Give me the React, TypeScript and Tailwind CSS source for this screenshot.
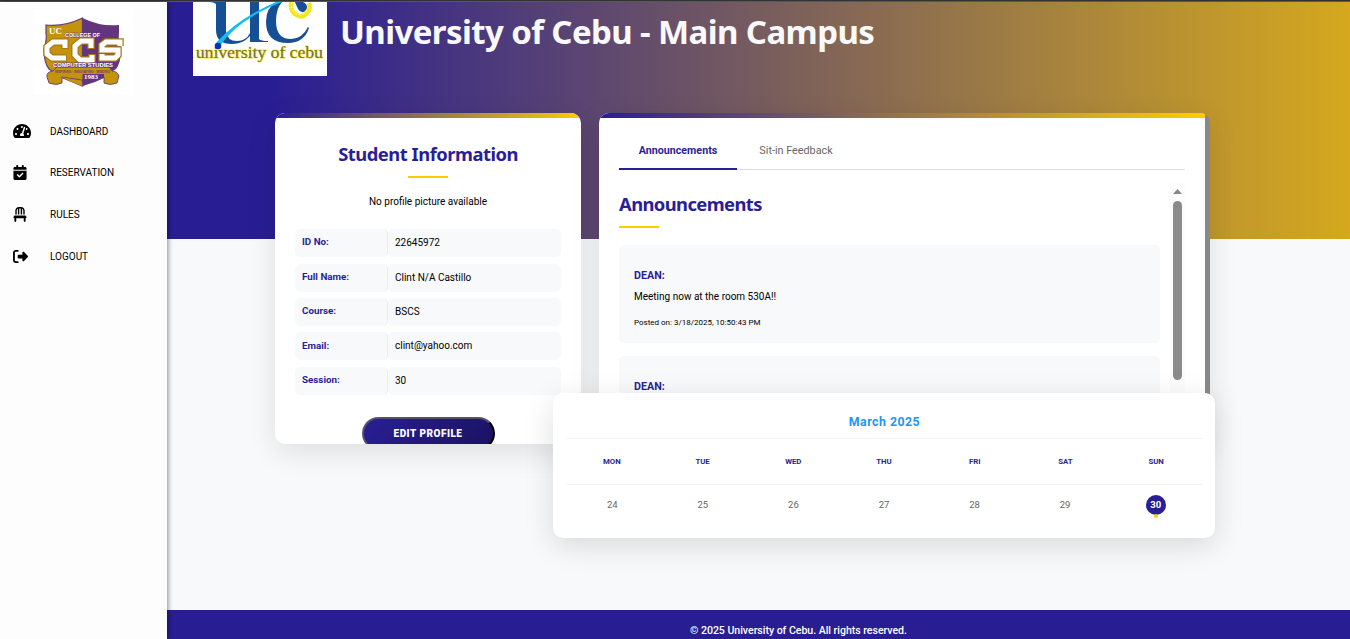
import React from "react";
import { FaCalendarCheck, FaChair, FaRightFromBracket } from "react-icons/fa6";
import { FaTachometerAlt } from "react-icons/fa";

const nav = [
  { label: "DASHBOARD", Icon: FaTachometerAlt, size: "h-4 w-[18px]" },
  { label: "RESERVATION", Icon: FaCalendarCheck, size: "h-[15px] w-[14px]" },
  { label: "RULES", Icon: FaChair, size: "h-[15px] w-[14px]" },
  { label: "LOGOUT", Icon: FaRightFromBracket, size: "h-[15px] w-[15px]" },
];

const info = [
  ["ID No:", "22645972"],
  ["Full Name:", "Clint N/A Castillo"],
  ["Course:", "BSCS"],
  ["Email:", "clint@yahoo.com"],
  ["Session:", "30"],
];

const weekdays = ["MON", "TUE", "WED", "THU", "FRI", "SAT", "SUN"];
const days = [24, 25, 26, 27, 28, 29, 30];

function CcsLogo() {
  return (
    <svg width="100" height="86" viewBox="0 0 100 86" className="block bg-white" fontFamily="Liberation Sans, sans-serif" fontWeight="bold">
      <path d="M49.500 9Q31 18 13 16V24Q14 31 11 40Q11 54 16 60L30 69L49.500 77Z" fill="#c4930c" stroke="#62407c" strokeWidth="1.200" />
      <path d="M49.500 9Q68 18 86 16V24Q85 31 88 40Q88 54 83 60L69 69L49.500 77Z" fill="#62357c" />
      <path d="M20 62Q13 63 14 68L16 74Q23 77 29 74V68L49 71L71 68V74Q77 77 84 74L86 67Q84 62 79 62L76 58H24Z" fill="#c4930c" stroke="#62407c" strokeWidth=".9" />
      <path d="M29 68L49.500 73V77L36 72Z" fill="#c4930c" />
      <path d="M49.500 65H71V69L62 73L49.500 77Z" fill="#62357c" />
      <text x="16" y="25" fontFamily="Liberation Serif, serif" fontSize="8" fill="white" textLength="13" lengthAdjust="spacingAndGlyphs">UC</text>
      <text x="32" y="28" fontSize="5.500" fill="white" stroke="#62407c" strokeWidth=".9" paintOrder="stroke" textLength="35" lengthAdjust="spacingAndGlyphs">COLLEGE OF</text>
      <g fill="none" strokeLinejoin="miter">
        <g stroke="#a97817" strokeWidth="7.500">
          <path d="M32 40V33H20L14 38V45L19 49H34" />
          <path d="M58 40V32H48L42 37V46L47 51H59V45" />
          <path d="M87 37V33H73L69 36V41H85V46L82 49H69V45" />
        </g>
        <g stroke="white" strokeWidth="5">
          <path d="M32 39V33H20L14 38V45L19 49H33" />
          <path d="M58 39V32H48L42 37V46L47 51H59V46" />
          <path d="M87 37V33H73L69 36V41H85V46L82 49H69V45" />
        </g>
      </g>
      <text x="20" y="57.500" fontSize="5.500" fill="white" stroke="#62407c" strokeWidth="1" paintOrder="stroke" textLength="60" lengthAdjust="spacingAndGlyphs">COMPUTER STUDIES</text>
      <text x="22" y="64" fontSize="3.200" fill="#6b4562" textLength="55" lengthAdjust="spacingAndGlyphs">INSPIRING · INNOVATING · MINDING</text>
      <text x="51" y="70" fontFamily="Liberation Serif, serif" fontSize="6" fill="white" textLength="14" lengthAdjust="spacingAndGlyphs">1983</text>
    </svg>
  );
}

function UcLogo() {
  return (
    <svg width="134" height="74" viewBox="0 2 134 74" className="block bg-white" fontFamily="Liberation Serif, serif">
      <g fill="#174f95">
        <path d="M16 2H33V31Q34 41 44 41Q53 41 57 33V2H66V39Q68 41 75 41V42H57V36Q50 44 39 44Q23 44 23 30V4Q21 2 16 2Z" />
        <path d="M89 0Q73 4 73 22Q73 43 95 43Q111 43 116 28L115 27Q109 39 98 39Q83 39 83 21Q83 7 91 0Z" />
      </g>
      <path d="M99 0Q96 9 102 14Q109 19 114 13Q118 9 116 3" fill="none" stroke="#f4e51c" strokeWidth="4.500" />
      <path d="M99 2Q97 10 104 14Q111 17 115 9" fill="none" stroke="white" strokeWidth=".8" strokeDasharray="2 2" />
      <path d="M101 0L105 9Q109 15 113 10Q116 5 110 2V0Z" fill="#174f95" />
      <path d="M26 47Q45 19 89 2H83Q44 19 23 43Z" fill="#13bdf0" />
      <text x="3.400" y="58.400" fontSize="16.500" fill="#f0e522" stroke="#f0e522" strokeWidth=".9" textLength="127" lengthAdjust="spacingAndGlyphs" aria-hidden="true">university of cebu</text>
      <text x="2.800" y="57.800" fontSize="16.500" fill="#77723c" textLength="127" lengthAdjust="spacingAndGlyphs">university of cebu</text>
      <circle cx="25" cy="46" r="3.300" fill="#0830b0" />
    </svg>
  );
}

export default function App() {
  return (
    <div className="relative flex h-[639px] w-[1350px] flex-col overflow-hidden bg-[#f8f9fb] font-['Roboto',sans-serif] text-black">
      <div className="h-0.5 shrink-0 border-b border-[#58565a] bg-[#333]" />
      <div className="flex min-h-0 flex-1">
        <aside className="z-10 w-[167px] shrink-0 bg-[#fdfdfd] shadow-[1px_0_5px_rgba(0,0,0,0.45)]">
          <div className="pt-[7px] pl-[33px]"><CcsLogo /></div>
          <nav className="mt-[15.500px] flex flex-col">
            {nav.map(({ label, Icon, size }) => (
              <a key={label} className="flex h-[41.600px] items-center pl-[13px] text-[10px]">
                <span className="w-[37px]"><Icon className={size} /></span>
                {label}
              </a>
            ))}
          </nav>
        </aside>

        <div className="flex min-w-0 flex-1 flex-col">
          <header className="flex h-[237px] shrink-0 items-start bg-[linear-gradient(90deg,#291d94_103px,#d5a81e_1183px)] pl-[26px]">
            <UcLogo />
            <h1 className="ml-[13px] mt-[6px] whitespace-nowrap font-['Noto_Sans',sans-serif] text-[33px] leading-[48px] font-bold tracking-[-0.600px] text-[#f8f9fb]">University of Cebu - Main Campus</h1>
          </header>

          <main className="-mt-[126px] flex h-[497px] shrink-0 flex-col pl-[108px]">
            <div className="flex h-[331px] shrink-0 gap-[18px]">
              <section className="w-[306px] overflow-hidden rounded-[10px] bg-white shadow-[0_8px_30px_rgba(0,0,0,0.11)]">
                <div className="h-[5px] bg-[linear-gradient(90deg,#2a1e96,#ffcc00)]" />
                <h2 className="mt-[22px] text-center font-['Noto_Sans',sans-serif] text-[18.400px] leading-[28px] font-bold tracking-[-0.500px] text-[#2a1e96]">Student Information</h2>
                <div className="mx-auto mt-[8px] h-0.5 w-10 bg-[#ffcc00]" />
                <p className="mt-[16px] text-center text-[10px] leading-4">No profile picture available</p>
                <div className="mt-[19.300px] flex flex-col gap-[6.400px] px-5 text-[10px]">
                  {info.map(([k, v]) => (
                    <div key={k} className="flex h-[28px]">
                      <div className="flex w-[93px] items-center rounded-[5px] border-r border-[#e9ebed] bg-[#f8f9fb] pb-px pl-[7px] text-[9.800px] font-bold text-[#2a1e96]">{k}</div>
                      <div className="flex flex-1 items-center rounded-[5px] bg-[#f8f9fb] pb-px pl-[7px]">{v}</div>
                    </div>
                  ))}
                </div>
                <button className="mx-auto mt-[22.500px] block h-[33px] w-[133px] rounded-full border-2 border-t-[#55516d] border-l-[#55516d] border-r-black border-b-black bg-linear-135 from-[#2a1e96] to-[#1a1260] text-[10px] font-black tracking-[0.500px] text-white">EDIT PROFILE</button>
              </section>

              <section className="flex w-[611px] overflow-hidden rounded-[10px] bg-[#888] shadow-[0_8px_30px_rgba(0,0,0,0.11)]">
                <div className="w-[606px] bg-white">
                  <div className="h-[5px] bg-[linear-gradient(90deg,#2a1e96,#ffcc00)]" />
                  <div className="mx-5 mt-[13px] flex h-[39px] border-b border-[#ddd] text-[10.800px]">
                    <div className="h-[39px] w-[118px] border-b-2 border-[#2a1e96] pt-[12px] text-center text-[10.700px] font-bold text-[#2a1e96]">Announcements</div>
                    <div className="w-[118px] pt-[12px] text-center text-[#666]">Sit-in Feedback</div>
                  </div>
                  <div className="mx-5 mt-[13px] flex">
                    <div className="w-[541px]">
                      <h2 className="mt-[7px] font-['Noto_Sans',sans-serif] text-[18.400px] leading-[28px] font-bold tracking-[-0.600px] text-[#2a1e96]">Announcements</h2>
                      <div className="mt-[8px] h-0.5 w-10 bg-[#ffcc00]" />
                      <article className="mt-[17px] h-[98px] rounded-[5px] bg-[#f8f9fb] px-[15px] pt-[23px]">
                        <h3 className="text-[10.700px] leading-4 font-bold text-[#2a1e96]">DEAN:</h3>
                        <p className="mt-[5px] text-[10px] leading-4">Meeting now at the room 530A!!</p>
                        <p className="mt-[12px] text-[8px] leading-3">Posted on: 3/18/2025, 10:50:43 PM</p>
                      </article>
                      <article className="mt-[13px] h-[98px] rounded-[5px] bg-[#f8f9fb] px-[15px] pt-[23px]">
                        <h3 className="text-[10.700px] leading-4 font-bold text-[#2a1e96]">DEAN:</h3>
                      </article>
                    </div>
                    <div className="ml-[10px] flex h-[260px] w-[15px] flex-col items-center bg-[#fcfcfc] pt-[6px]">
                      <svg width="9" height="5" viewBox="0 0 9 5" fill="#888"><path d="M4.500 0L9 5H0Z" /></svg>
                      <div className="mt-[7px] h-[179px] w-[9px] shrink-0 rounded-full bg-[#8b8b8b]" />
                    </div>
                  </div>
                </div>
              </section>
            </div>

            <section className="relative -mt-[51px] ml-[278px] h-[145px] w-[662px] rounded-[10px] bg-white pl-[14px] pr-[13px] pt-[17px] shadow-[0_8px_30px_rgba(0,0,0,0.13)]">
              <div className="h-[29px] border-b border-[#f1f1f1] text-center text-[12.300px] leading-6 font-bold tracking-[0.500px] text-[#2196f3]">March 2025</div>
              <div className="grid h-[46px] grid-cols-7 items-center border-b border-[#f1f1f1] text-center text-[7.800px] font-bold text-[#2a1e96]">
                {weekdays.map((d) => <span key={d} className="-ml-px">{d}</span>)}
              </div>
              <div className="mt-[10px] grid grid-cols-7 pr-px text-[9.500px] leading-[19px] text-[#666]">
                {days.map((d) => (
                  <div key={d} className={d === 30 ? "relative mx-auto size-5 rounded-full bg-[#2a1e96] text-center font-bold text-white" : "mx-auto size-5 text-center"}>
                    {d}
                    {d === 30 && <i className="absolute -bottom-[3px] left-2 size-1 rounded-full bg-[#ffcc00]" />}
                  </div>
                ))}
              </div>
            </section>
          </main>

          <footer className="h-[31px] shrink-0 bg-[#291d94] pt-[13px] pl-[80px] text-center text-[10.600px] leading-4 font-medium tracking-[-0.040px] text-white">© 2025 University of Cebu. All rights reserved.</footer>
        </div>
      </div>
    </div>
  );
}
